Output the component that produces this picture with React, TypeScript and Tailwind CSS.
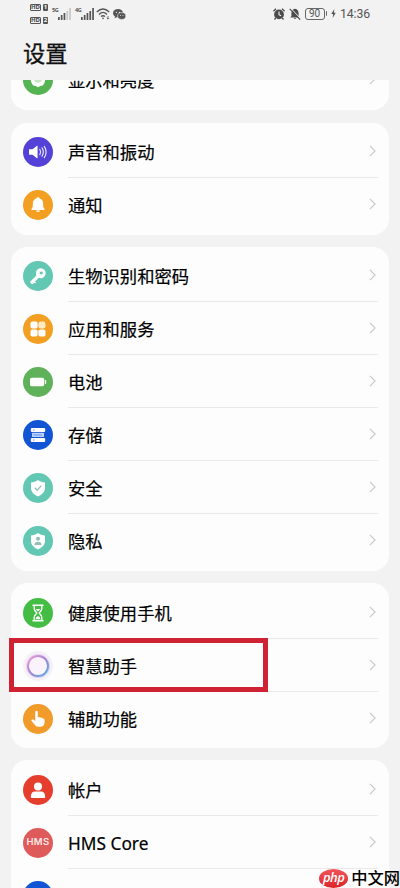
import React from "react";

type Item = { label: string; color: string; icon: React.ReactNode; boxed?: boolean };

const White = ({ children }: { children: React.ReactNode }) => (
  <svg viewBox="0 0 30 30" className="size-[30px]" fill="#fff">{children}</svg>
);

const shield = "M15 7 C17 8.7 19.5 9.3 22 9.4 V15 C22 19 19 21.8 15 23.5 C11 21.8 8 19 8 15 V9.4 C10.5 9.3 13 8.7 15 7Z";

const display: Item = {
  label: "显示和亮度",
  color: "bg-[#55b452]",
  icon: (
    <White>
      <path d="M15 22.2 Q12.8 20.6 10.2 20.6 Q8 18.6 7.6 14 L9 8 H21 L22.4 14 Q22 18.6 19.8 20.6 Q17.2 20.6 15 22.2Z" />
      <circle cx="15" cy="14" r="3.8" fill="#c4e6bf" />
    </White>
  ),
};

const sound: Item[] = [
  {
    label: "声音和振动",
    color: "bg-[#5442d8]",
    icon: (
      <White>
        <path d="M6 12.2 H9.5 L14 8.8 Q14.6 8.5 14.6 9.3 V20.7 Q14.6 21.5 14 21.2 L9.5 17.8 H6.8 Q6 17.8 6 17Z" />
        <g fill="none" stroke="#fff" strokeWidth="1.2" strokeLinecap="round" opacity=".85">
          <path d="M16.8 12.3 Q18.4 15 16.8 17.7" />
          <path d="M19 10.8 Q21.6 15 19 19.2" />
          <path d="M21.3 9.4 Q24.9 15 21.3 20.6" />
        </g>
      </White>
    ),
  },
  {
    label: "通知",
    color: "bg-[#f29f22]",
    icon: (
      <White>
        <path d="M15 7.3 C16 7.3 16.5 7.8 16.6 8.4 C19.2 9.2 20.2 11.2 20.2 13.8 V17 L21.6 19 Q21.9 20 21 20 H9 Q8.1 20 8.4 19 L9.8 17 V13.8 C9.8 11.2 10.8 9.2 13.4 8.4 C13.5 7.8 14 7.3 15 7.3Z" />
        <path d="M13 20.5 H17 Q16.6 22 15 22 Q13.4 22 13 20.5Z" />
      </White>
    ),
  },
];

const system: Item[] = [
  {
    label: "生物识别和密码",
    color: "bg-[#62c7b3]",
    icon: (
      <White>
        <path fillRule="evenodd" d="M17.8 7.2 a5 5 0 1 1 -2.1 9.6 L9.8 22.9 Q9.2 23.4 8.6 22.9 L7.4 21.7 Q6.9 21.1 7.4 20.5 L13.4 14.4 a5 5 0 0 1 4.4 -7.2Z M18.2 10.4 a1.6 1.6 0 1 0 .01 0Z" />
        <path d="M10.5 19 L13 21.5 L12 22.5 L9.5 20Z" />
      </White>
    ),
  },
  {
    label: "应用和服务",
    color: "bg-[#f29f22]",
    icon: (
      <White>
        <rect x="7.5" y="7.5" width="7.1" height="7.1" rx="1.8" />
        <rect x="15.4" y="7.5" width="7.1" height="7.1" rx="2.4" fill="#ffebc4" />
        <rect x="7.5" y="15.4" width="7.1" height="7.1" rx="1.8" />
        <rect x="15.4" y="15.4" width="7.1" height="7.1" rx="1.8" />
      </White>
    ),
  },
  {
    label: "电池",
    color: "bg-[#60b25a]",
    icon: (
      <White>
        <rect x="7" y="10.8" width="14.2" height="8.4" rx="1.8" />
        <rect x="21.9" y="13" width="1.2" height="4" rx=".6" />
      </White>
    ),
  },
  {
    label: "存储",
    color: "bg-[#1155d5]",
    icon: (
      <White>
        <rect x="7.8" y="8" width="14.4" height="4" rx="1" />
        <rect x="9" y="12.7" width="12" height="4.4" rx=".5" fill="#bcd3ff" />
        <rect x="7.8" y="17.9" width="14.4" height="4.2" rx="1" />
        <path d="M10 10 H11.5 M10.5 15 H19 M10 20 H11.5" stroke="#4d80e6" strokeWidth=".8" />
      </White>
    ),
  },
  {
    label: "安全",
    color: "bg-[#62c7b3]",
    icon: (
      <White>
        <path d={shield} />
        <path d="M11.7 14.8 L14.2 17.1 L18.4 12.7" fill="none" stroke="#8cbab3" strokeWidth="1.2" />
      </White>
    ),
  },
  {
    label: "隐私",
    color: "bg-[#62c7b3]",
    icon: (
      <White>
        <path d={shield} />
        <circle cx="15" cy="12.8" r="2" fill="#92bdb6" />
        <path d="M11.4 19 Q11.6 15.8 15 15.8 Q18.4 15.8 18.6 19Z" fill="#92bdb6" />
      </White>
    ),
  },
];

const assist: Item[] = [
  {
    label: "健康使用手机",
    color: "bg-[#43bd43]",
    icon: (
      <White>
        <g fill="none" stroke="#fff" strokeWidth="1.4" strokeLinecap="round" strokeLinejoin="round">
          <path d="M10 7.3 H20 M10 22.7 H20" />
          <path d="M11.2 7.8 V10.8 Q11.2 12.2 13.8 15 Q11.2 17.8 11.2 19.2 V22.2 M18.8 7.8 V10.8 Q18.8 12.2 16.2 15 Q18.8 17.8 18.8 19.2 V22.2" />
        </g>
        <path d="M12.6 11 H17.4 L15 13.6Z M12.4 21.3 Q12.8 19 15 18 Q17.2 19 17.6 21.3Z" />
      </White>
    ),
  },
  {
    label: "智慧助手",
    color: "bg-[#f6f0f9]",
    boxed: true,
    icon: (
      <svg viewBox="0 0 30 30" className="size-[30px]" fill="none">
        <defs>
          <linearGradient id="halo" x1="0" y1="0" x2="1" y2="1">
            <stop offset="0" stopColor="#ee9fdc" />
            <stop offset=".5" stopColor="#a384d2" />
            <stop offset="1" stopColor="#55b0e2" />
          </linearGradient>
        </defs>
        <circle cx="15" cy="15" r="10.4" stroke="url(#halo)" strokeWidth="3.4" opacity=".28" />
        <circle cx="15" cy="15" r="10" stroke="url(#halo)" strokeWidth="1.9" fill="#faf3fc" />
      </svg>
    ),
  },
  {
    label: "辅助功能",
    color: "bg-[#f09b2a]",
    icon: (
      <White>
        <path d="M12.2 8.2 Q12.2 6.8 13.5 6.8 Q14.8 6.8 14.8 8.2 V13.2 Q16.5 12.6 17.2 13.7 Q19 13.2 19.5 14.5 Q21.5 14.1 21.6 16 V18 Q21.5 22.8 17 22.8 H15.5 Q12.8 22.8 11.3 20.3 L8.2 16.4 Q8.5 14.9 10.2 15.6 L12.2 17.1Z" />
      </White>
    ),
  },
];

const account: Item[] = [
  {
    label: "帐户",
    color: "bg-[#e63e2c]",
    icon: (
      <White>
        <circle cx="15" cy="11.4" r="4" />
        <path d="M7.8 22.3 Q7.8 16.4 12 16.4 H18 Q22.2 16.4 22.2 22.3 Q22.2 23 21.5 23 H8.5 Q7.8 23 7.8 22.3Z" />
      </White>
    ),
  },
  {
    label: "HMS Core",
    color: "bg-[#df5a5a]",
    icon: <span className="font-['Inter'] text-[9.5px] font-semibold tracking-[0.4px] text-[#ffe9e6]">HMS</span>,
  },
  {
    label: "",
    color: "bg-[#1155d5]",
    icon: (
      <White>
        <circle cx="15" cy="10.5" r="3.5" />
        <path d="M8 22 Q8 15 15 15 Q22 15 22 22Z" />
      </White>
    ),
  },
];

function Row({ item, last }: { item: Item; last: boolean }) {
  return (
    <div className="relative flex h-[53px] shrink-0 items-center pl-[12px]">
      <div className={`flex size-[30px] shrink-0 items-center justify-center overflow-hidden rounded-full ${item.color}`}>
        {item.icon}
      </div>
      <div className={`ml-[15px] mr-[11px] flex h-full grow items-center justify-between border-b ${last ? "border-transparent" : "border-[#e9e9e9]"}`}>
        <span className="whitespace-nowrap pt-[4px] text-[17.3px] leading-6 text-black [-webkit-text-stroke:0.2px_#000]">{item.label}</span>
        <svg viewBox="0 0 8 14" className="mr-[2px] h-[12px] w-[7px]" fill="none" stroke="#c9c9c9" strokeWidth="1.4">
          <path d="M1 1 L7 7 L1 13" />
        </svg>
      </div>
      {item.boxed && <div className="absolute -left-[2px] -top-[1px] h-[54px] w-[259px] border-[5px] border-[#cf2334]" />}
    </div>
  );
}

function Card({ items, className }: { items: Item[]; className: string }) {
  return (
    <section className={`flex shrink-0 flex-col rounded-[16px] bg-[#fdfdfd] ${className}`}>
      {items.map((item, i) => (
        <Row key={i} item={item} last={i === items.length - 1} />
      ))}
    </section>
  );
}

function HdBadge({ n }: { n: string }) {
  return (
    <div className="flex h-[7px] gap-[2px] text-[6px] font-bold leading-[7px]">
      <span className="flex w-[11px] items-center justify-center rounded-[1px] border border-[#555] text-[#444]">HD</span>
      <span className="flex w-[5px] items-center justify-center rounded-[1px] bg-[#555] text-white">{n}</span>
    </div>
  );
}

function Signal({ label, weak }: { label: string; weak?: boolean }) {
  return (
    <div className="flex h-[12px] w-[19px] items-start">
      <span className="w-[6px] text-[5.5px] font-bold leading-[5px] tracking-[-0.4px]">{label}</span>
      <svg viewBox="0 0 13 12" className="h-[12px] w-[13px]" fill="#555">
        <path d="M0 9h1.7v3H0z M2.8 7h1.7v5H2.8z M5.6 5h1.7v7H5.6z" />
        <path d="M8.4 3h1.7v9H8.4z M11.2 0h1.7v12h-1.7z" fill={weak ? "#c6c6c6" : "#555"} />
      </svg>
    </div>
  );
}

function StatusBar() {
  return (
    <header className="flex h-[28px] shrink-0 items-center justify-between pl-[30px] pr-[30px] text-[#555]">
      <div className="flex items-center">
        <div className="flex w-[18px] flex-col gap-[6px]">
          <HdBadge n="1" />
          <HdBadge n="2" />
        </div>
        <div className="ml-[4px] flex gap-[4px]">
          <Signal label="5G" weak />
          <Signal label="4G" />
        </div>
        <svg viewBox="0 0 15 12" className="ml-[2px] h-[12px] w-[15px]" fill="none" stroke="#555" strokeWidth="1.4">
          <path d="M.8 4 Q7 -2.2 13.2 4 M3 6.4 Q7 2.4 11 6.4 M5 8.6 Q7 6.7 9 8.6" />
          <circle cx="7" cy="10.4" r=".8" fill="#555" stroke="none" />
          <path d="M12 8v3 M10.8 10l1.2 1.2 1.2-1.2" strokeWidth=".8" />
        </svg>
        <svg viewBox="0 0 13 11" className="ml-[2px] h-[11px] w-[13px]" fill="#555">
          <ellipse cx="5" cy="4.2" rx="5" ry="4.1" />
          <path d="M2 7 L1.6 9.2 L4.2 8z" />
          <ellipse cx="8.7" cy="7" rx="4.1" ry="3.4" stroke="#f2f2f2" strokeWidth=".6" />
          <g fill="#f2f2f2"><circle cx="3.4" cy="3.4" r=".6" /><circle cx="6.5" cy="3.4" r=".6" /><circle cx="7.5" cy="6.4" r=".5" /><circle cx="10" cy="6.4" r=".5" /></g>
        </svg>
      </div>
      <div className="flex items-center">
        <svg viewBox="0 0 12 12" className="size-[12px]">
          <circle cx="6" cy="6.4" r="4.9" fill="#4b4b4b" />
          <path d="M.4 3.2 L3 .8 M11.6 3.2 L9 .8 M2.7 10 L1.5 11.5 M9.3 10 L10.5 11.5" stroke="#4b4b4b" strokeWidth="1.3" />
          <path d="M6 3.5 V6.7 L8.1 7.8" stroke="#f2f2f2" strokeWidth="1.1" fill="none" />
        </svg>
        <svg viewBox="0 0 12 12" className="ml-[4px] size-[12px]">
          <path d="M6 .7 Q9.6 1.4 9.6 5.4 V8.2 L10.8 9.6 H1.2 L2.4 8.2 V5.4 Q2.4 1.4 6 .7Z M4.6 10.2 H7.4 Q6 12 4.6 10.2Z" fill="#4b4b4b" />
          <path d="M1.5 0 L12 11" stroke="#f2f2f2" strokeWidth="1" />
          <path d="M.7 .8 L11.2 11.7" stroke="#4b4b4b" strokeWidth="1.1" />
        </svg>
        <div className="ml-[4px] flex h-[12px] w-[20px] items-center justify-center rounded-[3px] border border-[#666] font-['Roboto'] text-[10px] leading-none">90</div>
        <div className="ml-[1px] h-[5px] w-[1.5px] rounded-r bg-[#666]" />
        <svg viewBox="0 0 6 11" className="ml-[4px] h-[11px] w-[5px]" fill="#555">
          <path d="M4 0 L.3 6 H2.6 L2 11 L5.7 4.7 H3.4Z" />
        </svg>
        <span className="ml-[4px] w-[30px] whitespace-nowrap pt-[1px] font-['Roboto'] text-[12.3px] leading-none tracking-[-0.1px]">14:36</span>
      </div>
    </header>
  );
}

export default function App() {
  return (
    <div className="relative flex h-[888px] w-[400px] flex-col overflow-hidden bg-[#f2f2f2] font-['Noto_Sans','Noto_Sans_CJK_SC',sans-serif]">
      <StatusBar />
      <h1 className="h-[52px] shrink-0 pl-[23px] pt-[10px] text-[22.3px] leading-[32px] text-[#111] [-webkit-text-stroke:0.3px_#111]">设置</h1>
      <main className="flex h-[808px] flex-col overflow-hidden px-[11px]">
        <Card items={[display]} className="mt-[-27px] pb-[4px]" />
        <Card items={sound} className="mt-[13px] pb-[4px] pt-[2px]" />
        <Card items={system} className="mt-[12px] pb-[4px] pt-[2px]" />
        <Card items={assist} className="mt-[12px] py-[3px]" />
        <Card items={account} className="mt-[12px] py-[3px]" />
      </main>
      <div className="absolute bottom-0 right-0 flex h-[19px] items-center gap-[3px]">
        <div className="flex h-[19px] w-[29px] items-center justify-center rounded-[50%] bg-linear-to-b from-[#f0545a] to-[#dc1f24] pb-[3px] font-['Open_Sans'] text-[13px] font-semibold italic leading-none tracking-[-0.5px] text-white">
          php
        </div>
        <span className="whitespace-nowrap text-[16.3px] font-medium leading-[19px] text-black">中文网</span>
      </div>
    </div>
  );
}
